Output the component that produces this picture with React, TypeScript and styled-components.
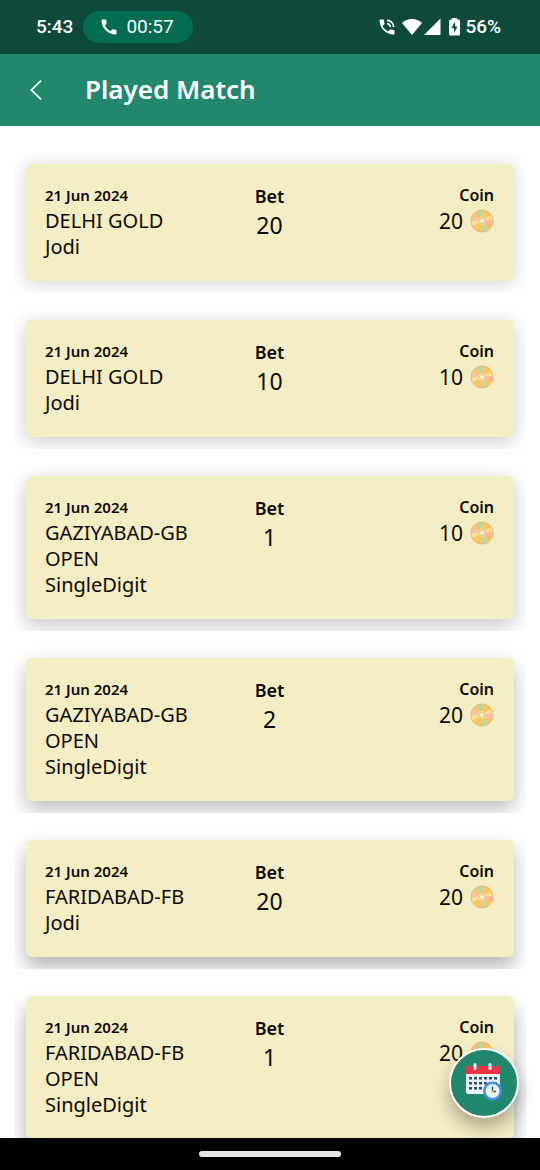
import React from "react";
import styled, { createGlobalStyle } from "styled-components";
import { MdCall, MdPhoneInTalk } from "react-icons/md";

const GlobalStyle = createGlobalStyle`
  * { box-sizing: border-box; }
  body {
    margin: 0;
    background: #fff;
    color: #0b0a05;
    font-family: "Noto Sans", "Open Sans", sans-serif;
  }
`;

const Screen = styled.div`
  position: relative;
  display: flex;
  flex-direction: column;
  height: 100vh;
  overflow: hidden;
`;

const StatusBar = styled.div`
  display: flex;
  align-items: center;
  flex: none;
  height: 54px;
  padding: 0 39px 0 36px;
  background: #0d4a3b;
  color: #fff;
  font: 500 19px/24px Roboto, sans-serif;
`;

const CallPill = styled.div`
  display: flex;
  align-items: center;
  gap: 7px;
  height: 32px;
  margin-left: 10px;
  padding: 0 19px 0 16px;
  border-radius: 16px;
  background: #046c50;
  font-weight: 400;
`;

const StatusIcons = styled.div`
  display: flex;
  align-items: center;
  margin-left: auto;
`;

const Battery = styled.span`
  display: flex;
  align-items: center;
  gap: 5px;
  margin-left: 6px;
`;

const Header = styled.header`
  display: flex;
  align-items: center;
  flex: none;
  height: 72px;
  padding: 0 24px;
  background: #21876d;
  color: #fff;
`;

const BackButton = styled.button`
  display: flex;
  align-items: center;
  justify-content: center;
  width: 24px;
  height: 48px;
  padding: 0;
  border: 0;
  background: none;
  color: inherit;
`;

const Title = styled.h1`
  margin: 0 0 0 37px;
  padding-bottom: 2px;
  font-size: 26px;
  line-height: 36px;
  font-weight: 600;
`;

const MatchList = styled.main`
  display: flex;
  flex-direction: column;
  gap: 15px;
  flex: 1;
  min-height: 0;
  padding: 26px 14px 0;
  overflow: hidden;
`;

const CardFrame = styled.div`
  flex: none;
  padding: 12px;
  overflow: hidden;
`;

const Card = styled.article<{ $depth: number }>`
  display: grid;
  grid-template-columns: 1fr 80px 1fr;
  padding: 19px 20px 21px 19px;
  border-radius: 6px;
  background: #f5edc4;
  box-shadow: 0 ${(p) => 2 + p.$depth * 2}px 20px
    rgba(0, 0, 0, ${(p) => 0.18 + p.$depth * 0.03});
`;

const Details = styled.div`
  display: flex;
  flex-direction: column;
`;

const MatchDate = styled.time`
  font-size: 15px;
  line-height: 25px;
  font-weight: 600;
`;

const Line = styled.span`
  font-size: 20px;
  line-height: 26px;
  white-space: nowrap;
`;

const Bet = styled.div`
  display: flex;
  flex-direction: column;
  align-items: center;
  font-size: 23px;
  line-height: 30px;
`;

const BetLabel = styled.span`
  font-size: 18px;
  line-height: 27px;
  font-weight: 600;
`;

const Coin = styled.div`
  display: flex;
  flex-direction: column;
  align-items: flex-end;
`;

const CoinLabel = styled.span`
  font-size: 16px;
  line-height: 25px;
  font-weight: 600;
`;

const Amount = styled.span`
  display: flex;
  align-items: center;
  gap: 7px;
  font-size: 21px;
  line-height: 26px;
`;

const CalendarButton = styled.button`
  position: absolute;
  right: 21px;
  bottom: 52px;
  display: flex;
  align-items: center;
  justify-content: center;
  width: 70px;
  height: 70px;
  padding: 0;
  border: 2px solid #fff;
  border-radius: 50%;
  background: #21876d;
  box-shadow: 0 10px 18px rgba(0, 0, 0, 0.3);
`;

const NavBar = styled.div`
  position: relative;
  display: flex;
  align-items: center;
  justify-content: center;
  flex: none;
  height: 32px;
  background: #000;
`;

const NavHandle = styled.div`
  width: 142px;
  height: 6px;
  border-radius: 3px;
  background: #e6e6e6;
`;

const matches = [
  { lines: ["DELHI GOLD", "Jodi"], bet: 20, coin: 20 },
  { lines: ["DELHI GOLD", "Jodi"], bet: 10, coin: 10 },
  { lines: ["GAZIYABAD-GB", "OPEN", "SingleDigit"], bet: 1, coin: 10 },
  { lines: ["GAZIYABAD-GB", "OPEN", "SingleDigit"], bet: 2, coin: 20 },
  { lines: ["FARIDABAD-FB", "Jodi"], bet: 20, coin: 20 },
  { lines: ["FARIDABAD-FB", "OPEN", "SingleDigit"], bet: 1, coin: 20 },
];

const Disc = () => (
  <svg width="24" height="24" viewBox="0 0 24 24" aria-hidden="true">
    <circle cx="12" cy="12" r="11" fill="#fdc55b" />
    <path d="M12 12 5.700 3A11 11 0 0 1 13 1Z" fill="#b9d9a4" />
    <path d="M12 12 21 5.700A11 11 0 0 1 23 11Z" fill="#fbe093" />
    <path d="M12 12 23 11A11 11 0 0 1 21.500 17.500Z" fill="#f9b9a0" />
    <path d="M12 12 17.500 21.500A11 11 0 0 1 11 23Z" fill="#b9d9a4" />
    <path d="M12 12 1 12A11 11 0 0 1 3 5.700Z" fill="#f9c2a0" />
    <path d="M12 12 1 12A11 11 0 0 0 2.500 17.500Z" fill="#fbe093" />
    <circle cx="12" cy="12" r="11" fill="none" stroke="#eab384" strokeWidth="1" />
    <circle cx="12" cy="12" r="4" fill="#f6d99c" />
    <circle cx="12" cy="12" r="2.600" fill="#faf3d6" stroke="#e8b47c" strokeWidth="0.800" />
  </svg>
);

const CalendarIcon = () => (
  <svg width="38" height="40" viewBox="0 0 38 40" aria-hidden="true">
    <path d="M1 10H35V29a2 2 0 0 1-2 2H3a2 2 0 0 1-2-2Z" fill="#eef3fb" />
    <path d="M1 11V5a2 2 0 0 1 2-2H33a2 2 0 0 1 2 2V11Z" fill="#f03244" />
    <rect x="8.500" y="0" width="3" height="7" rx="1.500" fill="#eef3fb" />
    <rect x="23.500" y="0" width="3" height="7" rx="1.500" fill="#eef3fb" />
    <g fill="#294a78">
      {[14, 19, 24].map((y) =>
        [4, 9, 14, 19, 24, 29].map((x) => (
          <rect key={`${x}-${y}`} x={x} y={y} width="3" height="2.500" />
        ))
      )}
    </g>
    <circle cx="27.500" cy="28" r="9.500" fill="#3f91e8" />
    <circle cx="27.500" cy="28" r="7" fill="#e6f3fd" />
    <path d="M27.500 23.500V28.500H31" fill="none" stroke="#294a78" strokeWidth="1.300" />
    <circle cx="27.500" cy="28.500" r="1.200" fill="#f2b632" />
  </svg>
);

const App = () => (
  <Screen>
    <GlobalStyle />
    <StatusBar>
      <span>5:43</span>
      <CallPill>
        <MdCall size={20} aria-hidden />
        <span>00:57</span>
      </CallPill>
      <StatusIcons>
        <MdPhoneInTalk size={20} aria-hidden />
        <svg width="46" height="18" viewBox="0 0 46 18" fill="#fff" aria-hidden="true">
          <path d="M5 5C10 -0.500 20 -0.500 25 5L15 17Z" />
          <path d="M27 17 43.500 0.500V17Z" />
        </svg>
        <Battery>
          <svg width="11" height="18" viewBox="0 0 11 18" aria-hidden="true">
            <path
              d="M3 0H8V1.500H9.500A1.300 1.300 0 0 1 11 3V16A1.500 1.500 0 0 1 9.500 17.500H1.500A1.500 1.500 0 0 1 0 16V3A1.500 1.500 0 0 1 1.500 1.500H3Z"
              fill="#fff"
            />
            <path d="M6 3.500 2.500 10H5V15L8.500 8.500H6Z" fill="#0d4a3b" />
          </svg>
          56%
        </Battery>
      </StatusIcons>
    </StatusBar>
    <Header>
      <BackButton aria-label="Back">
        <svg width="12" height="20" viewBox="0 0 12 20" fill="none" aria-hidden="true">
          <path d="M11 0.700 1.300 10 11 19.300" stroke="currentColor" strokeWidth="1.800" />
        </svg>
      </BackButton>
      <Title>Played Match</Title>
    </Header>
    <MatchList>
      {matches.map((match, index) => (
        <CardFrame key={index}>
          <Card $depth={index}>
            <Details>
              <MatchDate dateTime="2024-06-21">21 Jun 2024</MatchDate>
              {match.lines.map((line) => (
                <Line key={line}>{line}</Line>
              ))}
            </Details>
            <Bet>
              <BetLabel>Bet</BetLabel>
              {match.bet}
            </Bet>
            <Coin>
              <CoinLabel>Coin</CoinLabel>
              <Amount>
                {match.coin}
                <Disc />
              </Amount>
            </Coin>
          </Card>
        </CardFrame>
      ))}
    </MatchList>
    <CalendarButton aria-label="Choose date">
      <CalendarIcon />
    </CalendarButton>
    <NavBar>
      <NavHandle />
    </NavBar>
  </Screen>
);

export default App;
